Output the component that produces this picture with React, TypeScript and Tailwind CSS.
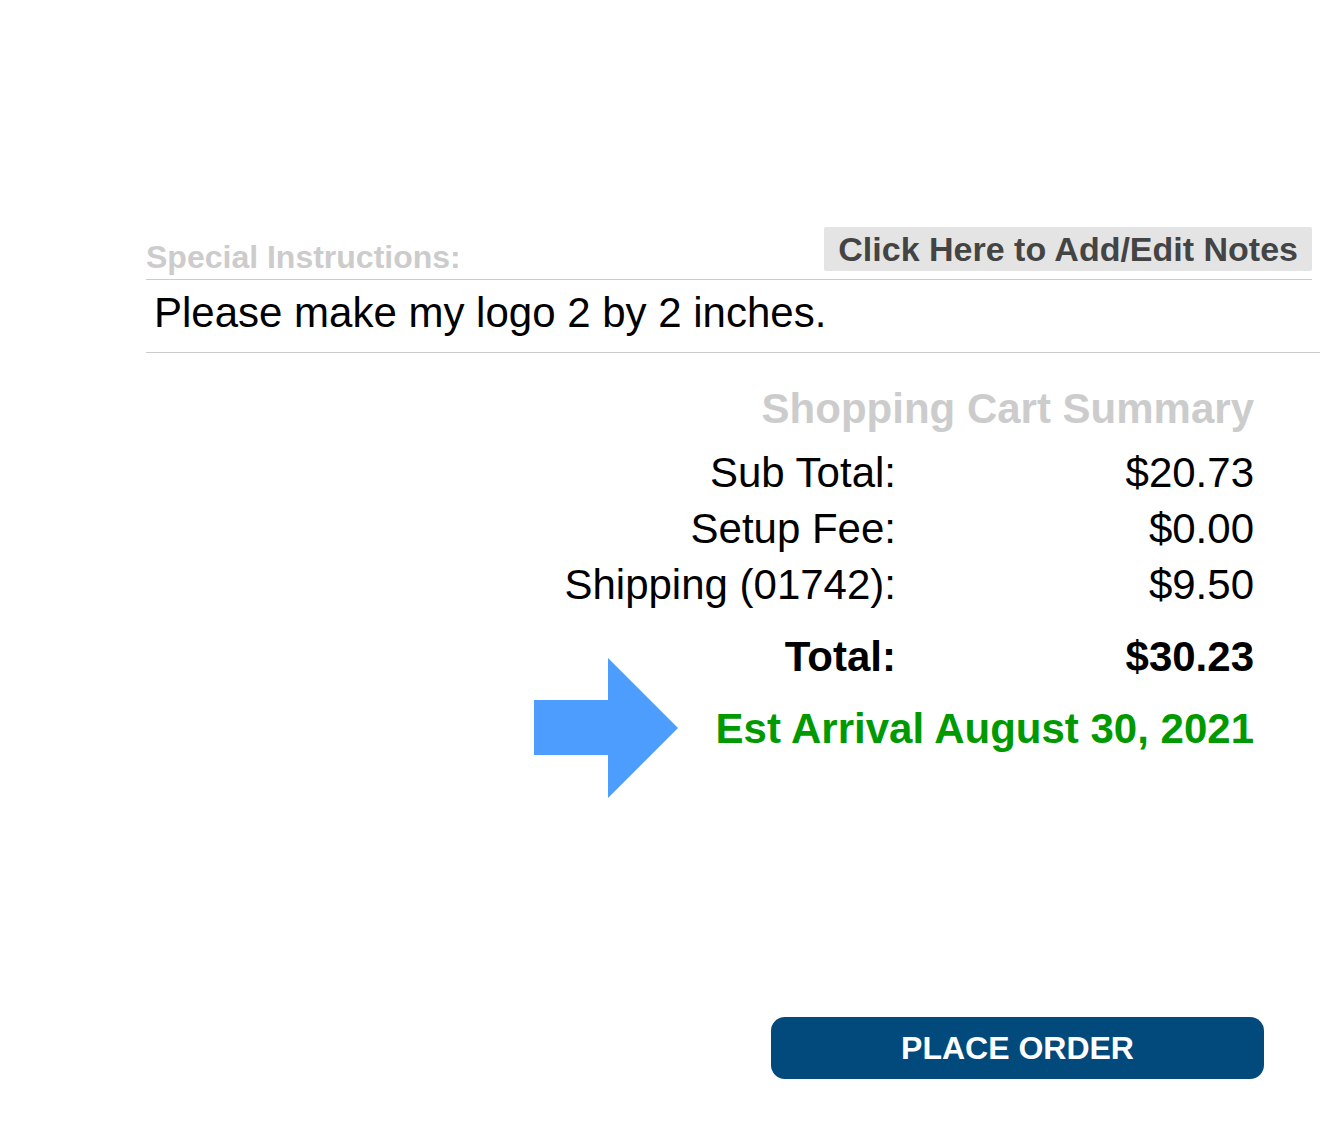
const font = { fontFamily: '"Liberation Sans", Arial, Helvetica, sans-serif' };

function Arrow() {
  return (
    <svg width="144" height="140" viewBox="0 0 144 140" className="my-[-42px] mr-[38px] mt-[-44px] shrink-0">
      <polygon points="0,42 74,42 74,0 144,70 74,140 74,97 0,97" fill="#4d9dff" />
    </svg>
  );
}

function SummaryRow({ label, value, bold }: { label: string; value: string; bold?: boolean }) {
  return (
    <div className={"flex h-[56px] items-center text-[42px] leading-[56px] text-black " + (bold ? "font-bold" : "")}>
      <span className="flex-1 text-right">{label}</span>
      <span className="w-[358px] text-right">{value}</span>
    </div>
  );
}

export default function App() {
  return (
    <div className="min-h-[1138px] w-[1334px] bg-white pl-[146px] pr-[14px] pt-[227px]" style={font}>
      {/* notes header */}
      <div className="mr-[8px] flex items-end justify-between border-b border-[#cccccc] pb-[8px]">
        <span className="mb-[-2px] text-[32px] font-bold leading-none text-[#cccccc]">Special Instructions:</span>
        <button className="rounded-[2px] bg-[#e4e4e4] px-[14px] py-[5px] text-[34px] font-bold leading-none text-[#444444]">
          Click Here to Add/Edit Notes
        </button>
      </div>
      <div className="border-b border-[#cccccc] pb-[15px] pl-[8px] pt-[9px] text-[42px] leading-[48px] text-black">
        Please make my logo 2 by 2 inches.
      </div>

      {/* cart summary */}
      <div className="pr-[66px] pt-[32px]">
        <div className="mb-[12px] text-right text-[42px] font-bold leading-[48px] text-[#cccccc]">Shopping Cart Summary</div>
        <SummaryRow label="Sub Total:" value="$20.73" />
        <SummaryRow label="Setup Fee:" value="$0.00" />
        <SummaryRow label="Shipping (01742):" value="$9.50" />
        <div className="mt-[16px]">
          <SummaryRow label="Total:" value="$30.23" bold />
        </div>
        <div className="mt-[16px] flex h-[56px] items-center justify-end">
          <Arrow />
          <span className="text-[42px] font-bold leading-[56px] text-[#009a00]">Est Arrival August 30, 2021</span>
        </div>
      </div>

      <div className="mr-[56px] mt-[260px] flex justify-end">
        <button className="h-[62px] w-[493px] rounded-[14px] bg-[#014a7b] text-[32px] font-bold text-white">PLACE ORDER</button>
      </div>
    </div>
  );
}
